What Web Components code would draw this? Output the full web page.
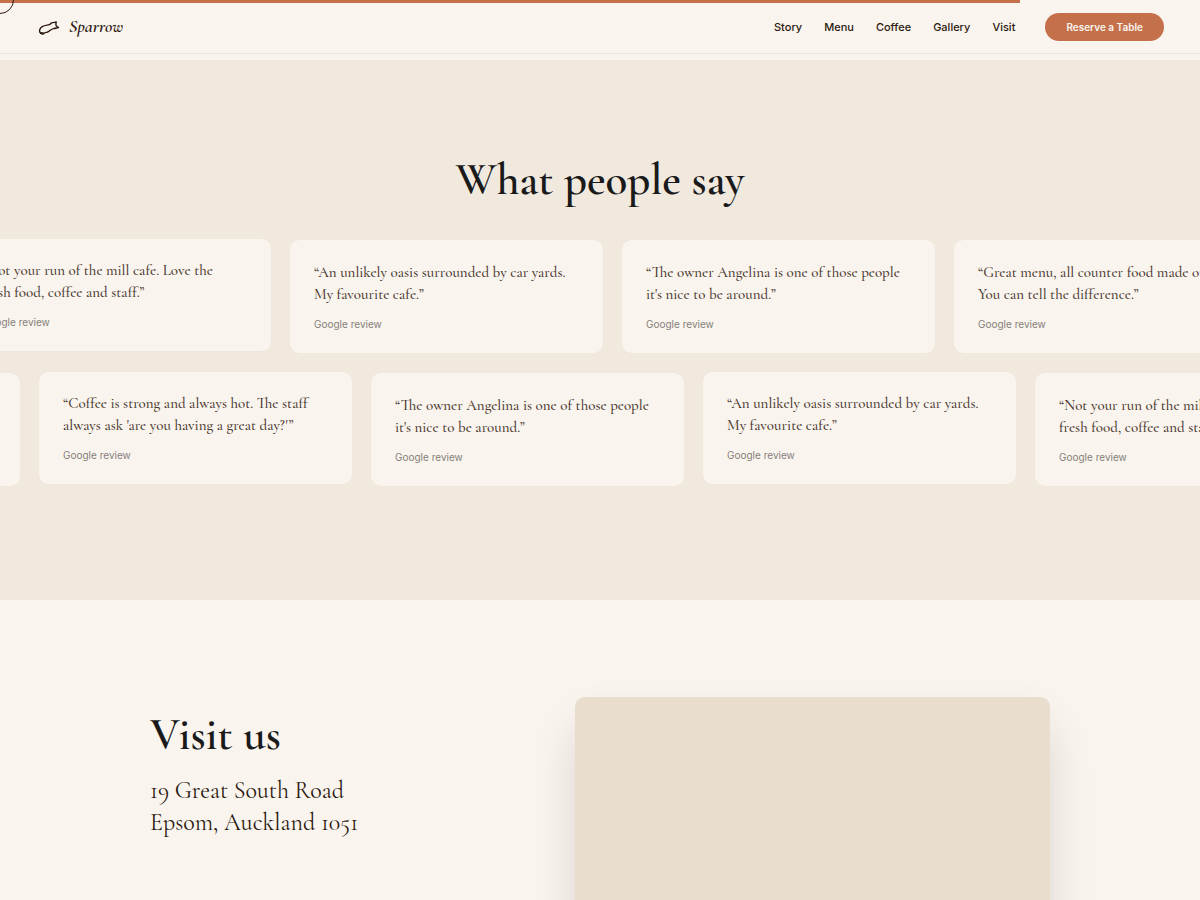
<!DOCTYPE html>
<html lang="en">
<head>
<meta charset="utf-8">
<meta name="viewport" content="width=device-width, initial-scale=1">
<title>Sparrow</title>
<style>
  :root {
    --cream: #f9f4ed;
    --sand: #f1e9de;
    --linen: #e9ddcd;
    --accent: #c4704b;
    --ink: #1a1a1a;
    --brown: #2c1810;
    --serif: "Cormorant Garamond", "Liberation Serif", serif;
    --sans: Inter, sans-serif;
  }
  html { scrollbar-width: none; }
  body { margin: 0; background: var(--cream); color: var(--brown); font-family: var(--sans); overflow-x: hidden; }
</style>
</head>
<body>
<sparrow-page></sparrow-page>

<script>
const define = (name, html) => {
  const template = document.createElement('template');
  template.innerHTML = html;
  customElements.define(name, class extends HTMLElement {
    constructor() {
      super();
      this.attachShadow({ mode: 'open' }).append(template.content.cloneNode(true));
    }
  });
};

define('scroll-progress', `
  <style>
    :host { display: block; position: absolute; top: 0; left: 0; right: 0; height: 3px; }
    div { width: 85%; height: 100%; background: var(--accent); }
  </style>
  <div></div>`);

define('cursor-ring', `
  <style>
    :host { display: block; position: absolute; top: -14px; left: -14px; width: 28px; height: 28px;
      box-sizing: border-box; border: 1px solid var(--brown); border-radius: 50%; pointer-events: none; }
  </style>`);

define('brand-logo', `
  <style>
    :host { display: block; }
    a { display: flex; align-items: center; gap: 7px; color: var(--brown); text-decoration: none;
      font: italic 600 18px/22px var(--serif); }
    svg { display: block; }
    span { padding-bottom: 2px; }
  </style>
  <a href="#">
    <svg width="26" height="24" viewBox="0 0 26 24" fill="none" stroke="currentColor" stroke-width="1.4" stroke-linejoin="round" stroke-linecap="round" aria-hidden="true">
      <path d="M4.4 18C3 16.6 3.2 13.4 6.2 11.6C9 9.9 11.6 10.3 13.4 9.6C15 9 15 7.7 16.4 7.6C17.8 7.6 18.9 7.7 20.2 6.9C20.2 8.2 19.8 8.8 19.9 9.8C20.2 11.2 21.4 11.6 22.4 12.6C21 12.7 19.6 13.4 17.6 13.6C14.8 14 13.6 16.4 11.2 17.2C9.6 17.6 8.4 17.2 7.4 19Z"/>
      <path d="M5 18.2H7" stroke-width="2"/>
    </svg>
    <span>Sparrow</span>
  </a>`);

define('nav-link', `
  <style>
    :host { display: block; }
    a { display: block; color: var(--brown); text-decoration: none; font: 500 11px/16px var(--sans); }
  </style>
  <a href="#"><slot></slot></a>`);

define('pill-button', `
  <style>
    :host { display: block; }
    button { display: block; border: 0; border-radius: 14px; padding: 6px 21px; background: var(--accent);
      color: var(--cream); font: 600 10px/16px var(--sans); cursor: pointer; }
  </style>
  <button type="button"><slot></slot></button>`);

define('site-header', `
  <style>
    :host { display: block; border-bottom: 1px solid #ece5dc; background: var(--cream); }
    header { display: flex; align-items: center; justify-content: space-between; padding: 13px 36px 12px; }
    nav { display: flex; align-items: center; gap: 22px; }
    .right { display: flex; align-items: center; gap: 30px; }
  </style>
  <header>
    <brand-logo></brand-logo>
    <div class="right">
      <nav>
        <nav-link>Story</nav-link>
        <nav-link>Menu</nav-link>
        <nav-link>Coffee</nav-link>
        <nav-link>Gallery</nav-link>
        <nav-link>Visit</nav-link>
      </nav>
      <pill-button>Reserve a Table</pill-button>
    </div>
  </header>`);

define('section-title', `
  <style>
    :host { display: block; }
    h2 { margin: 0; color: var(--ink); font: 600 45px/48px var(--serif); }
  </style>
  <h2><slot></slot></h2>`);

define('review-card', `
  <style>
    :host { display: block; flex: none; box-sizing: border-box; width: 313px; padding: 21px 24px 20px;
      border-radius: 9px; background: var(--cream); box-shadow: 0 0 1px 0 rgba(44, 24, 16, .07); }
    :host([raised]) { margin-top: -1px; padding-top: 20px; }
    figure { margin: 0; }
    blockquote { margin: 0 0 11px; color: #4a3830; font: 500 15px/22px var(--serif); white-space: nowrap; }
    figcaption { color: #85807a; font: 400 10px/17px var(--sans); }
  </style>
  <figure>
    <blockquote><slot></slot></blockquote>
    <figcaption>Google review</figcaption>
  </figure>`);

define('review-row', `
  <style>
    :host { display: flex; align-items: flex-start; gap: 19px; margin-left: var(--shift, 0); }
  </style>
  <slot></slot>`);

define('review-section', `
  <style>
    :host { display: block; overflow: hidden; padding: 96px 0 114px; background: var(--sand); }
    section-title { margin-bottom: 36px; text-align: center; }
    .rows { display: grid; gap: 20px; }
    .first { --shift: -42px; }
    .second { --shift: -293px; }
  </style>
  <section-title>What people say</section-title>
  <div class="rows">
    <review-row class="first">
      <review-card raised>“Not your run of the mill cafe. Love the<br>fresh food, coffee and staff.”</review-card>
      <review-card>“An unlikely oasis surrounded by car yards.<br>My favourite cafe.”</review-card>
      <review-card>“The owner Angelina is one of those people<br>it's nice to be around.”</review-card>
      <review-card>“Great menu, all counter food made onsite.<br>You can tell the difference.”</review-card>
    </review-row>
    <review-row class="second">
      <review-card>“Great menu, all counter food made onsite.<br>You can tell the difference.”</review-card>
      <review-card raised>“Coffee is strong and always hot. The staff<br>always ask 'are you having a great day?'”</review-card>
      <review-card>“The owner Angelina is one of those people<br>it's nice to be around.”</review-card>
      <review-card raised>“An unlikely oasis surrounded by car yards.<br>My favourite cafe.”</review-card>
      <review-card>“Not your run of the mill cafe. Love the<br>fresh food, coffee and staff.”</review-card>
    </review-row>
  </div>`);

define('map-panel', `
  <style>
    :host { display: block; min-height: 340px; border-radius: 10px; background: var(--linen);
      box-shadow: 0 24px 48px -10px rgba(26, 26, 46, .2); }
  </style>`);

define('visit-section', `
  <style>
    :host { display: block; padding: 97px 24px; }
    .grid { display: grid; grid-template-columns: 4fr 5fr; gap: 45px; max-width: 900px; margin: 0 auto; }
    .info { padding-top: 14px; }
    address { margin-top: 16px; color: var(--brown); font: 400 24px/32px var(--serif); }
  </style>
  <div class="grid">
    <div class="info">
      <section-title>Visit us</section-title>
      <address>19 Great South Road<br>Epsom, Auckland 1051</address>
    </div>
    <map-panel></map-panel>
  </div>`);

define('sparrow-page', `
  <style>
    :host { display: block; position: relative; }
    main { padding-top: 6px; }
  </style>
  <site-header></site-header>
  <main>
    <review-section></review-section>
    <visit-section></visit-section>
  </main>
  <scroll-progress></scroll-progress>
  <cursor-ring></cursor-ring>`);
</script>
</body>
</html>
